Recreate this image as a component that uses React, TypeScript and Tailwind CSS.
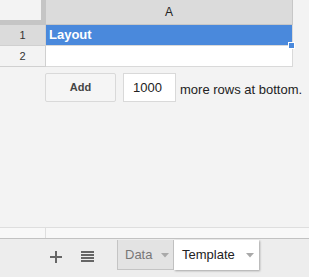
const Caret = () => (
  <svg width="8" height="5" viewBox="0 0 8 5" className="ml-[9px] mt-[1px]">
    <path d="M0 0h8L4 4.5z" fill="#a9a9a9" />
  </svg>
);

export default function App() {
  return (
    <div className="flex h-[277px] w-[309px] flex-col overflow-hidden bg-[#f3f3f3] font-['Liberation_Sans',Arial,sans-serif]">
      {/* Grid */}
      <div className="flex-1">
        {/* Column headers */}
        <div className="flex h-[25px]">
          <div className="h-[25px] w-[46px] bg-[#c5c5c5]">
            <div className="h-[20px] w-[41px] bg-[#f3f3f3]" />
          </div>
          <div className="flex h-[25px] w-[247px] items-center justify-center border-r border-b border-[#c7c7c7] bg-[#dbdbdb] text-[12px] text-[#222]">
            A
          </div>
        </div>

        {/* Row 1 */}
        <div className="flex h-[21px]">
          <div className="flex w-[46px] items-center justify-center border-r border-b border-[#d0d0d0] bg-[#dbdbdb] text-[11px] text-[#333]">
            1
          </div>
          <div className="relative flex w-[247px] items-center border-r border-b border-[#d9d9d9] bg-[#4a89dc] pl-[3px] text-[13px] font-bold text-white">
            Layout
            <div className="absolute right-[-3px] bottom-[-4px] h-[7px] w-[7px] border border-white bg-[#4a89dc]" />
          </div>
        </div>

        {/* Row 2 */}
        <div className="flex h-[21px]">
          <div className="flex w-[46px] items-center justify-center border-r border-b border-[#d0d0d0] bg-[#f3f3f3] text-[11px] text-[#333]">
            2
          </div>
          <div className="w-[247px] border-r border-b border-[#d9d9d9] bg-white" />
        </div>

        {/* Add rows */}
        <div className="mt-[6px] flex items-center pl-[45px]">
          <button className="h-[29px] w-[71px] rounded-[2px] border border-[#d9d9d9] bg-[#f5f5f5] text-[11px] font-bold text-[#444]">
            Add
          </button>
          <div className="ml-[7px] flex h-[29px] w-[53px] items-center border border-[#d9d9d9] bg-white pl-[9px] text-[13px] text-[#222]">
            1000
          </div>
          <span className="ml-[4px] mt-[4px] text-[13px] text-[#222]">more rows at bottom.</span>
        </div>
      </div>

      {/* Scroll strip */}
      <div className="flex h-[11px] border-t border-[#dedede] bg-[#f8f8f8]">
        <div className="w-[46px] border-r border-[#dedede]" />
        <div className="flex-1" />
      </div>

      {/* Sheet tabs */}
      <div className="flex h-[39px] border-t border-[#c2c2c2] bg-[#ededed]">
        <div className="flex w-[117px] items-start pt-[10px]">
          <svg width="12" height="12" viewBox="0 0 12 12" className="ml-[50px] mt-[2px]">
            <path d="M5 0h2v5h5v2H7v5H5V7H0V5h5z" fill="#666" />
          </svg>
          <svg width="13" height="11" viewBox="0 0 13 11" className="ml-[19px] mt-[2px]">
            <path d="M0 0h13v2H0zM0 3h13v2H0zM0 6h13v2H0zM0 9h13v2H0z" fill="#666" />
          </svg>
        </div>
        <div className="mt-[1px] flex h-[30px] w-[57px] items-center border border-t-0 border-[#c4c4c4] bg-[#e3e3e3] pl-[7px] text-[13px] text-[#777]">
          Data
          <Caret />
        </div>
        <div className="mt-[1px] flex h-[30px] w-[85px] items-center bg-white pl-[8px] text-[13px] text-[#222] shadow-[1px_1px_2px_rgba(0,0,0,0.3)]">
          Template
          <span className="ml-[2px]">
            <Caret />
          </span>
        </div>
      </div>
    </div>
  );
}
